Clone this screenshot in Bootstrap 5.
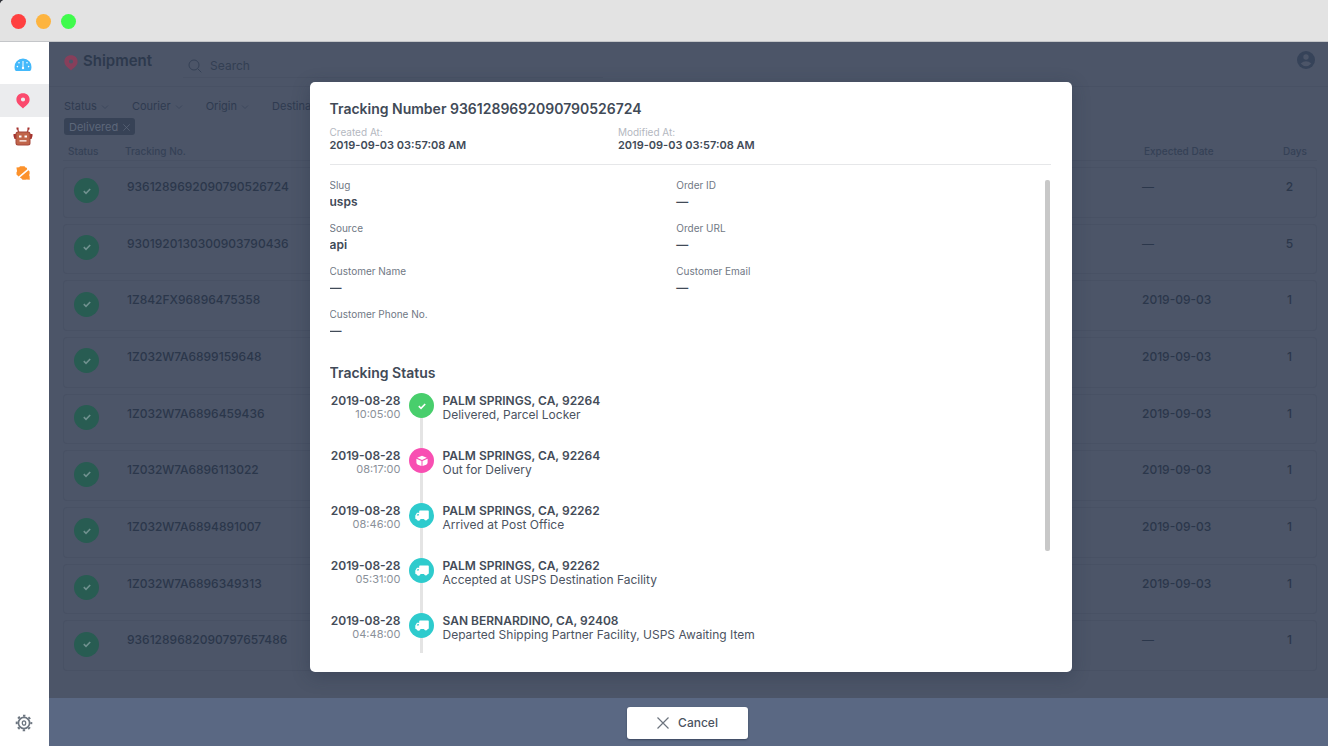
<!DOCTYPE html>
<html lang="en">
<head>
<meta charset="utf-8">
<meta name="viewport" content="width=device-width, initial-scale=1">
<title>Shipment</title>
<link href="https://cdn.jsdelivr.net/npm/bootstrap@5.3.0/dist/css/bootstrap.min.css" rel="stylesheet">
<style>
body{font-family:Inter,"Liberation Sans",sans-serif;font-size:11px;line-height:14px;color:#2f3b50;background:#303238}
.window{height:100vh;min-height:600px;border-radius:5px 0 0 0;overflow:hidden;background:#fff}
.titlebar{height:42px;padding:1px 11px 0;gap:10px;background:#e3e3e3;border-bottom:1px solid #c4c6c9}
.dot{width:15px;height:15px;border-radius:50%}
.dot.close-dot{background:#ff4040}.dot.min-dot{background:#fdb43f}.dot.max-dot{background:#3ffb4c}
.side{width:49px;background:#fff;padding:5px 0;gap:1px}
.side a{height:36px;display:flex;align-items:center;justify-content:center;padding-right:4px}
.side a.active{height:33px;background:#ebecee}
.side a.gear{padding-right:2px}
.workspace,.details,.listwrap,.sheet-area{min-height:0}
.main-area{background:#4c5568;min-width:0}
.topbar{height:45px;border-bottom:1px solid #485164;padding:0 13px 0 15px}
.topbar h1{gap:5px;font-size:15px;line-height:20px;font-weight:600;color:#2d394d;margin:0;padding-top:9px}
.search{margin-left:31px;width:420px;height:24px;margin-top:12px;padding-left:5px;border-bottom:1px solid #485164}
.search input{background:none;border:0;outline:0;font-size:12px;color:#2d394d;padding:0;width:100px}
.search input::placeholder{color:#333f53;opacity:1}
.account{margin-top:9px}
.filters{max-width:261px;overflow:hidden;padding:12px 0 0 15px;gap:23px}
.filters button{flex:none;white-space:nowrap;border:0;background:none;padding:0;color:#2f3b50;font-size:11px;line-height:14px}
.filters button:last-child{flex:0 1 auto;min-width:0;overflow:hidden;text-align:left}
.filters svg{color:#3d485c;margin-left:1px}
.pill{margin:5px 15px 0;height:17px;padding:0 5px;border:0;border-radius:3px;background:#374256;color:#5d677a;font-size:11px;line-height:16px}
.pill svg{margin-left:2px}
.listwrap{margin:0 11px 21px 14px}
.shipments{width:100%;height:100%;border-collapse:separate;border-spacing:0 6px}
.shipments th{height:20px;font-size:10px;font-weight:500;color:#354156;border-bottom:1px solid #485164;padding:0 0 0 2px;vertical-align:middle}
.shipments td{border:1px solid #485164;border-width:1px 0;vertical-align:top;padding:11px 0 0 4px;font-size:12px;line-height:16px;font-weight:500;color:#2b374b}
.shipments th:first-child{padding-left:5px}
.shipments td:first-child{border-left-width:1px;border-radius:4px 0 0 4px;vertical-align:middle;padding:0 0 3px 10px}
.shipments td:last-child{border-right-width:1px;border-radius:0 4px 4px 0;text-align:center;padding-left:0}
.shipments th:last-child{text-align:center;padding-left:10px}
.shipments th.c-ex{padding-left:6px}
.c-st{width:60px}.c-ex{width:125px}.c-dy{width:54px}
.tick{width:25px;height:25px;border-radius:50%;background:#285c52}
.overlay{position:absolute;inset:0}
.sheet-area{padding:40px 0 26px 4px}
.sheet{width:100%;max-width:762px;background:#fff;border-radius:5px;box-shadow:0 4px 18px rgba(30,40,60,.3);padding:18px 21px 19px 20px;color:#454d58}
.sheet h2,.sheet h3{font-size:14px;line-height:18px;font-weight:600;color:#414a57;margin:0}
.sheet h3{margin:14px 0 11px}
.stamps{margin-top:8px;padding-bottom:12px;border-bottom:1px solid #e6e7e9;font-size:10px;line-height:13px;color:#b4b8bf}
.stamps>div{width:40%}
.stamps b{display:block;font-size:11px;font-weight:600;color:#414a57}
.fields{margin:0;width:97%}
.fields>div{height:43px}
.fields dt{font-size:10px;font-weight:400;color:#707884;line-height:14px}
.fields dd{font-size:12px;font-weight:600;color:#414a57;line-height:16px;margin:2px 0 0}
.details{margin-top:13px;overflow:hidden}
.thumb{width:5px;height:78%;background:#c8c8c8;border-radius:2px;margin:2px 1px 0 0}
.ev{height:55px}
.ev time{width:71px;text-align:right;font-size:11px;line-height:12px;color:#8a9099}
.ev time b,.ev p b{display:block;font-size:12px;line-height:14px;font-weight:600;color:#444c58}
.ev time,.ev p{padding-top:1px}
.ev p{margin:0;font-size:12px;line-height:14px;color:#4b535f}
.rail{width:42px;background:linear-gradient(#e4e4e4,#e4e4e4) center/3px 100% no-repeat}
.node{width:25px;height:25px;border-radius:50%;background:#2ecbcd}
.node.ok{background:#48ce6c}.node.out{background:#f84fb2}
.ev:first-child .rail{background-position:center 12px}
.foot{height:48px;padding:2px 2px 0 0;background:#5a6883}
.cancel{width:121px;height:32px;background:#fff;border:0;border-radius:3px;color:#4b535f;font-size:12px;font-weight:500;gap:9px;box-shadow:0 1px 2px rgba(30,40,60,.5)}
.cancel svg{color:#6d747e}
</style>
</head>
<body>
<svg class="d-none">
 <symbol id="pin" viewBox="0 0 14 16"><path fill-rule="evenodd" d="M7 .3C3 .3.4 3 .4 6.600c0 4 3.200 6 6.600 8.900 3.400-2.900 6.600-4.900 6.600-8.900C13.600 3 11 .3 7 .3zm0 4.100a2.100 2.100 0 1 1 0 4.200A2.100 2.100 0 0 1 7 4.400z"/></symbol>
 <symbol id="check" viewBox="0 0 10 10"><path d="M1.800 5.200l2.200 2.100 4.200-4.300" fill="none" stroke="currentColor" stroke-width="1.600"/></symbol>
 <symbol id="chev" viewBox="0 0 8 6"><path d="M1 1.500l3 3 3-3" fill="none" stroke="currentColor"/></symbol>
 <symbol id="cross" viewBox="0 0 12 12"><path d="M.5.5l11 11M11.500.5l-11 11" fill="none" stroke="currentColor" stroke-width="1.200"/></symbol>
 <symbol id="truck" viewBox="0 0 14 12"><path fill="#fff" d="M5 .5h8q.8 0 .8.8v7q0 .8-.8.8h-.3a1.900 1.900 0 0 1-3.700 0H5.500a1.900 1.900 0 0 1-3.700.3L.3 8.800V5.500L2 2.700h2.200V1.300q0-.8.800-.8z"/><path fill="#2ecbcd" d="M2.600 3.900h1.200v1.500H1.700z"/></symbol>
 <symbol id="box" viewBox="0 0 12 12"><path fill="#fff" d="M6 .8l4.800 1.900L6 4.900 1.200 2.700zM.4 3.700l5.100 2.200v5L1.800 9.700Q.4 9 .4 7.500zM11.600 3.700L6.500 5.900v5l3.700-1.200q1.400-.7 1.400-2.200z"/></symbol>
</svg>
<div class="window d-flex flex-column">
 <header class="titlebar d-flex align-items-center flex-shrink-0">
  <span class="dot close-dot"></span><span class="dot min-dot"></span><span class="dot max-dot"></span>
 </header>
 <div class="workspace d-flex flex-grow-1">
  <nav class="side d-flex flex-column flex-shrink-0" aria-label="Main">
   <a href="#" aria-label="Dashboard"><svg width="18" height="14" viewBox="0 0 18 14"><path fill="#43b9fb" d="M9 .5a8.500 8.500 0 0 0-8.400 9.500q0 2.600 1.400 3h14q1.400-.4 1.400-3A8.500 8.500 0 0 0 9 .5z"/><path d="M9 3v6.500" stroke="#fff" stroke-width="1"/><g fill="#fff"><circle cx="5" cy="4.800" r=".8"/><circle cx="13" cy="4.800" r=".8"/><circle cx="3.400" cy="8.600" r=".8"/><circle cx="14.600" cy="8.600" r=".8"/><circle cx="9" cy="10" r="1.200"/></g></svg></a>
   <a href="#" class="active" aria-label="Shipment"><svg width="14" height="16" fill="#fb4a6d"><use href="#pin"/></svg></a>
   <a href="#" aria-label="Bot"><svg width="20" height="19" viewBox="0 0 20 19"><path d="M4.500 1.500l1.300 4M15.500 1.500l-1.300 4" stroke="#a93c38" stroke-width="1.200"/><path fill="#a5322e" d="M3.500.5h2v2h-2zM14.500.5h2v2h-2zM.5 7h3v5h-2L.5 9zM19.500 7h-3v5h2l1-3z"/><rect x="2.500" y="4.500" width="15" height="14" rx="2.500" fill="#a5463a"/><rect x="3.500" y="5.500" width="13" height="12" rx="1.500" fill="#c0654a"/><path fill="#fff" d="M6 8.500h2.500v2H6zM11.500 8.500H14v2h-2.500zM6.500 13.300h7v1.200h-7z"/></svg></a>
   <a href="#" aria-label="Parcels"><svg width="14" height="14" viewBox="0 0 14 14"><path fill="#fc922c" d="M.4 1.600l2.800-.3L4 .3h4.500l1 1.200 1.200.2.500 1.500L2.600 10.500.5 8.500V6.300l.6-1zM12.500 4.300l1.100 1.200v2.700l-.6.800.6 1 .2 3.700-3.300-.3-1 .4H6.500l-1-1.300-1.600-1z"/></svg></a>
   <a href="#" class="gear mt-auto" aria-label="Settings"><svg width="18" height="18" viewBox="0 0 18 18" fill="none" stroke="#6d7680"><circle cx="9" cy="9" r="5.600" stroke-width="1.700"/><circle cx="9" cy="9" r="7.300" stroke-width="2" stroke-dasharray="2.400 3.333" stroke-dashoffset="1.200"/><ellipse cx="9" cy="9" rx="1.700" ry="2.200" stroke-width="1.300"/></svg></a>
  </nav>
  <div class="main-area position-relative flex-grow-1 d-flex flex-column">
   <header class="topbar d-flex flex-shrink-0">
    <h1 class="d-flex align-items-start"><svg width="14" height="16" fill="#873f5b" class="flex-shrink-0 mt-1"><use href="#pin"/></svg><span>Shipment</span></h1>
    <label class="search d-flex align-items-center gap-2"><svg width="14" height="14" viewBox="0 0 14 14" fill="none" stroke="#354156"><circle cx="6" cy="6" r="5"/><path d="M9.800 9.800l3.500 3.500"/></svg><input type="search" placeholder="Search" aria-label="Search"></label>
    <button class="account btn d-flex p-0 border-0 ms-auto align-self-start" aria-label="Account"><svg width="18" height="18" viewBox="0 0 18 18"><circle cx="9" cy="9" r="9" fill="#364359"/><circle cx="9" cy="6" r="2.700" fill="#4c5568"/><path d="M3.600 12.500q5.400-4.600 10.800 0Q9 18 3.600 12.500z" fill="#4c5568"/></svg></button>
   </header>
   <div class="filters d-flex flex-shrink-0">
    <button>Status <svg width="8" height="6"><use href="#chev"/></svg></button><button>Courier <svg width="8" height="6"><use href="#chev"/></svg></button><button>Origin <svg width="8" height="6"><use href="#chev"/></svg></button><button aria-label="Destination">Destina</button>
   </div>
   <button class="pill align-self-start flex-shrink-0">Delivered <svg width="7" height="7"><use href="#cross" width="7" height="7"/></svg></button>
   <div class="listwrap flex-grow-1">
    <table class="shipments">
     <thead><tr><th class="c-st">Status</th><th>Tracking No.</th><th class="c-ex">Expected Date</th><th class="c-dy">Days</th></tr></thead>
     <tbody id="rows"></tbody>
    </table>
   </div>
   <div class="foot flex-shrink-0"></div>
   <div class="overlay d-flex flex-column" role="dialog" aria-label="Tracking details">
    <div class="sheet-area flex-grow-1 d-flex justify-content-center">
     <section class="sheet d-flex flex-column">
      <h2>Tracking Number 9361289692090790526724</h2>
      <div class="stamps row gx-0"><div>Created At:<b>2019-09-03 03:57:08 AM</b></div><div>Modified At:<b>2019-09-03 03:57:08 AM</b></div></div>
      <div class="details d-flex flex-grow-1">
       <div class="flex-grow-1">
        <dl class="fields row gx-0 row-cols-2">
         <div><dt>Slug</dt><dd>usps</dd></div><div><dt>Order ID</dt><dd>—</dd></div>
         <div><dt>Source</dt><dd>api</dd></div><div><dt>Order URL</dt><dd>—</dd></div>
         <div><dt>Customer Name</dt><dd>—</dd></div><div><dt>Customer Email</dt><dd>—</dd></div>
         <div><dt>Customer Phone No.</dt><dd>—</dd></div>
        </dl>
        <h3>Tracking Status</h3>
        <div id="events"></div>
       </div>
       <div class="thumb flex-shrink-0"></div>
      </div>
     </section>
    </div>
    <div class="foot d-flex align-items-center justify-content-center flex-shrink-0">
     <button class="cancel d-flex align-items-center justify-content-center"><svg width="12" height="12"><use href="#cross"/></svg>Cancel</button>
    </div>
   </div>
  </div>
 </div>
</div>
<script src="https://cdn.jsdelivr.net/npm/bootstrap@5.3.0/dist/js/bootstrap.bundle.min.js"></script>
<script>
const d='2019-09-03';
const rows=[['9361289692090790526724','—',2],['9301920130300903790436','—',5],['1Z842FX96896475358',d,1],['1Z032W7A6899159648',d,1],['1Z032W7A6896459436',d,1],['1Z032W7A6896113022',d,1],['1Z032W7A6894891007',d,1],['1Z032W7A6896349313',d,1],['9361289682090797657486','—',1]];
document.getElementById('rows').innerHTML=rows.map(r=>`<tr><td><span class="tick d-flex align-items-center justify-content-center"><svg width="10" height="10" color="#70918f"><use href="#check"/></svg></span></td><td>${r[0]}</td><td>${r[1]}</td><td>${r[2]}</td></tr>`).join('');
const ic={ok:['check',10,10],out:['box',12,12],van:['truck',14,12]};
const ev=[['10:05:00','ok','PALM SPRINGS, CA, 92264','Delivered, Parcel Locker'],['08:17:00','out','PALM SPRINGS, CA, 92264','Out for Delivery'],['08:46:00','van','PALM SPRINGS, CA, 92262','Arrived at Post Office'],['05:31:00','van','PALM SPRINGS, CA, 92262','Accepted at USPS Destination Facility'],['04:48:00','van','SAN BERNARDINO, CA, 92408','Departed Shipping Partner Facility, USPS Awaiting Item']];
document.getElementById('events').innerHTML=ev.map(e=>{const[i,w,h]=ic[e[1]];return `<div class="ev d-flex"><time><b>2019-08-28</b>${e[0]}</time><div class="rail d-flex justify-content-center"><span class="node ${e[1]} d-flex align-items-center justify-content-center"><svg width="${w}" height="${h}" color="#fff"><use href="#${i}"/></svg></span></div><p><b>${e[2]}</b>${e[3]}</p></div>`}).join('');
</script>
</body>
</html>
